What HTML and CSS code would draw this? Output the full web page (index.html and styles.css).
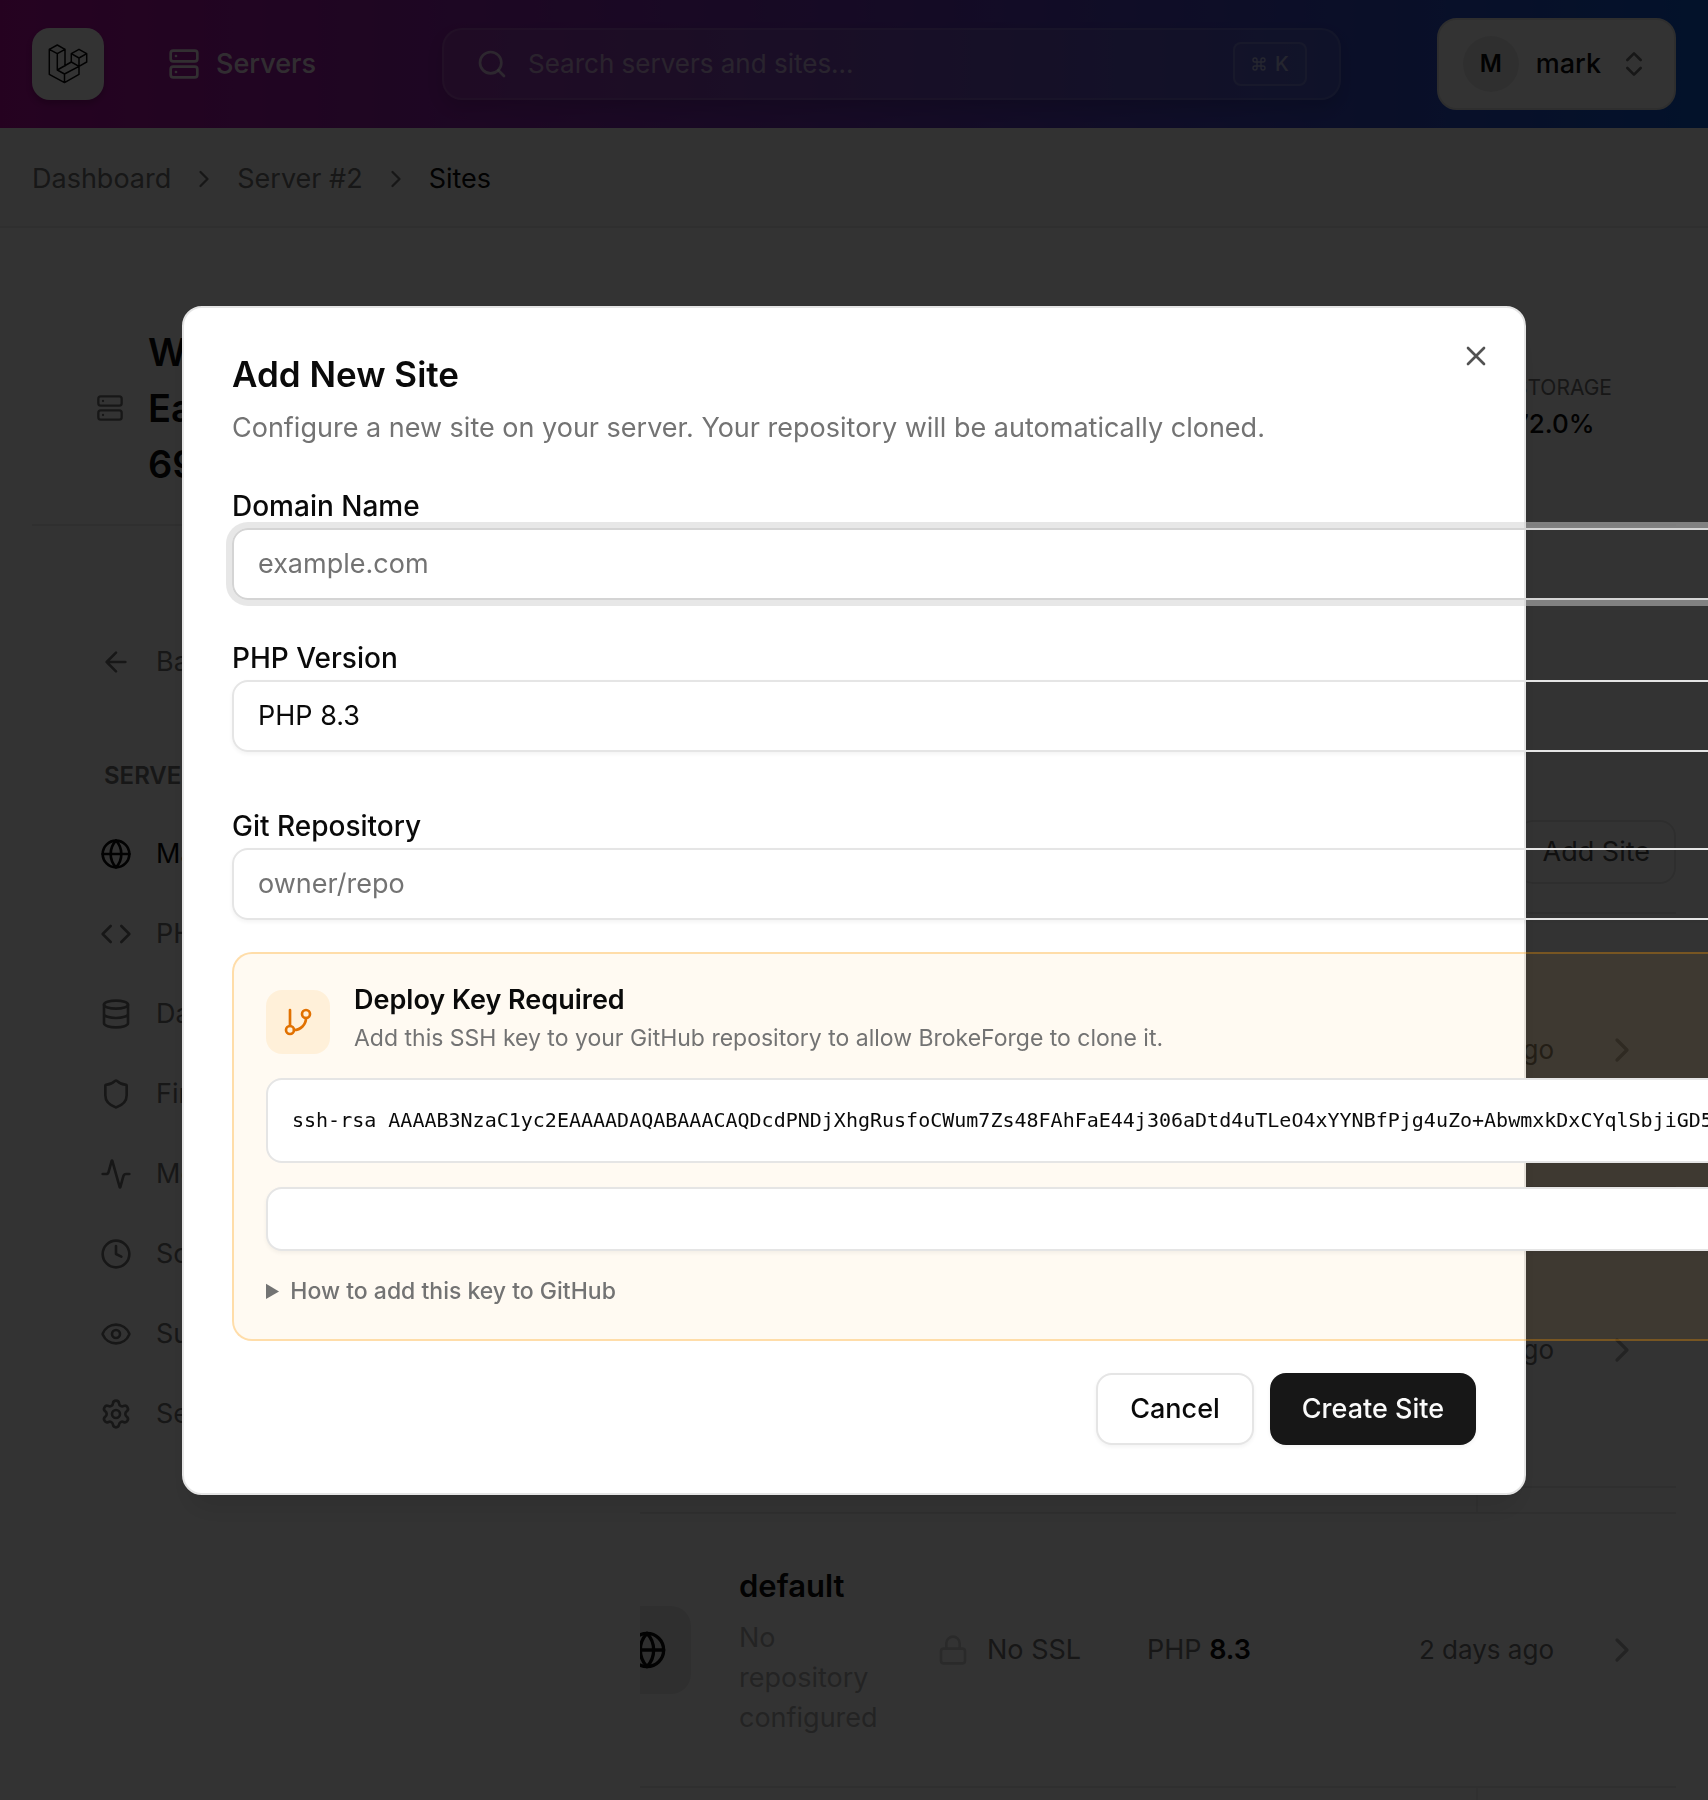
FILE: index.html
```html
<!DOCTYPE html>
<html lang="en">
<head>
<meta charset="utf-8">
<meta name="viewport" content="width=device-width, initial-scale=1">
<title>Sites</title>
<link rel="stylesheet" href="styles.css">
</head>
<body>
<svg class="sprite" aria-hidden="true">
  <symbol id="server" viewBox="0 0 24 24"><rect width="20" height="8" x="2" y="2" rx="2"/><rect width="20" height="8" x="2" y="14" rx="2"/><path d="M6 6h.01M6 18h.01"/></symbol>
  <symbol id="globe" viewBox="0 0 24 24"><circle cx="12" cy="12" r="10"/><path d="M12 2a14.5 14.5 0 0 0 0 20 14.5 14.5 0 0 0 0-20M2 12h20"/></symbol>
  <symbol id="chevron-right" viewBox="0 0 24 24"><path d="m9 18 6-6-6-6"/></symbol>
  <symbol id="lock" viewBox="0 0 24 24"><rect width="18" height="11" x="3" y="11" rx="2"/><path d="M7 11V7a5 5 0 0 1 10 0v4"/></symbol>
</svg>

<header class="topbar">
  <a class="logo" href="#" aria-label="Home">
    <svg viewBox="0 0 40 40" class="logo-mark"><path d="M1.300 5.300 9.300 1 17 5.300 9.300 9.700zM1.300 5.300v25L16.500 38.600 31 30.300v-8L16.500 30v8.600M9.300 9.700V26l7.200 4M17 5.300V22M9.300 26l14-8M23.300 9.700 31 5.300l7.700 4.400L31 14zM23.300 9.700V18l7.700 4.300 7.700-4.300V9.700M31 14v8.300"/></svg>
  </a>
  <a class="nav-link" href="#"><svg class="i32"><use href="#server"/></svg>Servers</a>
  <button class="search" type="button">
    <svg class="i32" viewBox="0 0 24 24"><circle cx="11" cy="11" r="8"/><path d="m21 21-4.300-4.300"/></svg>
    <span class="search-text">Search servers and sites...</span>
    <kbd class="kbd"><svg class="i16" viewBox="0 0 24 24"><path d="M15 6v12a3 3 0 1 0 3-3H6a3 3 0 1 0 3 3V6a3 3 0 1 0-3 3h12a3 3 0 1 0-3-3"/></svg>K</kbd>
  </button>
  <button class="user" type="button">
    <span class="avatar">M</span>
    <span>mark</span>
    <svg class="i32 muted" viewBox="0 0 24 24"><path d="m7 15 5 5 5-5M7 9l5-5 5 5"/></svg>
  </button>
</header>

<nav class="crumbs" aria-label="Breadcrumb">
  <a href="#">Dashboard</a>
  <svg class="i28"><use href="#chevron-right"/></svg>
  <a href="#">Server #2</a>
  <svg class="i28"><use href="#chevron-right"/></svg>
  <span class="crumb-current">Sites</span>
</nav>

<main class="page">
  <section class="server-head">
    <svg class="i28 muted"><use href="#server"/></svg>
    <h1 class="server-name">Web<br>East<br>69</h1>
    <div class="stat"><span class="stat-label">Storage</span><span class="stat-value">72.0%</span></div>
  </section>

  <div class="columns">
    <aside class="sidebar">
      <a class="side-link back" href="#"><svg class="i32" viewBox="0 0 24 24"><path d="m12 19-7-7 7-7M19 12H5"/></svg>Back</a>
      <h2 class="side-title">Server</h2>
      <a class="side-link active" href="#"><svg class="i32"><use href="#globe"/></svg>Main</a>
      <a class="side-link" href="#"><svg class="i32" viewBox="0 0 24 24"><path d="m16 18 6-6-6-6M8 6l-6 6 6 6"/></svg>PHP</a>
      <a class="side-link" href="#"><svg class="i32" viewBox="0 0 24 24"><ellipse cx="12" cy="5" rx="9" ry="3"/><path d="M3 5v14a9 3 0 0 0 18 0V5M3 12a9 3 0 0 0 18 0"/></svg>Data</a>
      <a class="side-link" href="#"><svg class="i32" viewBox="0 0 24 24"><path d="M20 13c0 5-3.500 7.500-7.660 8.950a1 1 0 0 1-.67-.01C7.500 20.500 4 18 4 13V6a1 1 0 0 1 1-1c2 0 4.500-1.200 6.240-2.720a1.170 1.170 0 0 1 1.520 0C14.510 3.810 17 5 19 5a1 1 0 0 1 1 1z"/></svg>Firewall</a>
      <a class="side-link" href="#"><svg class="i32" viewBox="0 0 24 24"><path d="M22 12h-2.480a2 2 0 0 0-1.930 1.460l-2.350 8.360a.25.25 0 0 1-.48 0L9.240 2.180a.25.25 0 0 0-.48 0l-2.350 8.360A2 2 0 0 1 4.490 12H2"/></svg>Monitor</a>
      <a class="side-link" href="#"><svg class="i32" viewBox="0 0 24 24"><circle cx="12" cy="12" r="10"/><path d="M12 6v6l4 2"/></svg>Schedule</a>
      <a class="side-link" href="#"><svg class="i32" viewBox="0 0 24 24"><path d="M2.062 12.348a1 1 0 0 1 0-.696 10.750 10.750 0 0 1 19.876 0 1 1 0 0 1 0 .696 10.750 10.750 0 0 1-19.876 0"/><circle cx="12" cy="12" r="3"/></svg>Supervisor</a>
      <a class="side-link" href="#"><svg class="i32" viewBox="0 0 24 24"><path d="M9.671 4.136a2.340 2.340 0 0 1 4.659 0 2.340 2.340 0 0 0 3.319 1.915 2.340 2.340 0 0 1 2.330 4.033 2.340 2.340 0 0 0 0 3.831 2.340 2.340 0 0 1-2.330 4.033 2.340 2.340 0 0 0-3.319 1.915 2.340 2.340 0 0 1-4.659 0 2.340 2.340 0 0 0-3.320-1.915 2.340 2.340 0 0 1-2.330-4.033 2.340 2.340 0 0 0 0-3.831A2.340 2.340 0 0 1 6.350 6.051a2.340 2.340 0 0 0 3.319-1.915"/><circle cx="12" cy="12" r="3"/></svg>Settings</a>
    </aside>

    <section class="content">
      <div class="content-head"><button class="add-site" type="button">Add Site</button></div>
      <div class="sites">
        <article class="site">
          <span class="tile"><svg class="i40"><use href="#globe"/></svg></span>
          <div class="site-name"><h3>default</h3><p>No repository configured</p></div>
          <span class="ssl"><svg class="i32"><use href="#lock"/></svg>No SSL</span>
          <span class="php">PHP <b>8.3</b></span>
          <span class="age">2 days ago</span>
          <svg class="i40 go"><use href="#chevron-right"/></svg>
        </article>
        <div class="strip"></div>
        <article class="site">
          <span class="tile"><svg class="i40"><use href="#globe"/></svg></span>
          <div class="site-name"><h3>default</h3><p>No repository configured</p></div>
          <span class="ssl"><svg class="i32"><use href="#lock"/></svg>No SSL</span>
          <span class="php">PHP <b>8.3</b></span>
          <span class="age">2 days ago</span>
          <svg class="i40 go"><use href="#chevron-right"/></svg>
        </article>
        <div class="strip"></div>
        <article class="site">
          <span class="tile"><svg class="i40"><use href="#globe"/></svg></span>
          <div class="site-name"><h3>default</h3><p>No repository configured</p></div>
          <span class="ssl"><svg class="i32"><use href="#lock"/></svg>No SSL</span>
          <span class="php">PHP <b>8.3</b></span>
          <span class="age">2 days ago</span>
          <svg class="i40 go"><use href="#chevron-right"/></svg>
        </article>
        <div class="strip"></div>
      </div>
    </section>
  </div>
</main>

<div class="overlay">
  <div class="dialog" role="dialog" aria-modal="true" aria-labelledby="dialog-title">
    <button class="close" type="button" aria-label="Close"><svg class="i32" viewBox="0 0 24 24"><path d="M18 6 6 18M6 6l12 12"/></svg></button>
    <h2 class="dialog-title" id="dialog-title">Add New Site</h2>
    <p class="dialog-text">Configure a new site on your server. Your repository will be automatically cloned.</p>

    <form class="form" id="site-form">
      <div class="field">
        <label for="domain">Domain Name</label>
        <input class="input focused" id="domain" type="text" placeholder="example.com">
      </div>
      <div class="field">
        <label for="php">PHP Version</label>
        <select class="input" id="php"><option>PHP 8.3</option></select>
      </div>
      <div class="field repo">
        <label for="repo">Git Repository</label>
        <input class="input" id="repo" type="text" placeholder="owner/repo">
      </div>
      <div class="deploy">
        <div class="deploy-head">
          <span class="deploy-icon"><svg class="i32" viewBox="0 0 24 24"><path d="M6 3v12"/><circle cx="18" cy="6" r="3"/><circle cx="6" cy="18" r="3"/><path d="M18 9a9 9 0 0 1-9 9"/></svg></span>
          <div>
            <h3 class="deploy-title">Deploy Key Required</h3>
            <p class="deploy-text">Add this SSH key to your GitHub repository to allow BrokeForge to clone it.</p>
          </div>
        </div>
        <code class="key">ssh-rsa AAAAB3NzaC1yc2EAAAADAQABAAACAQDcdPNDjXhgRusfoCWum7Zs48FAhFaE44j306aDtd4uTLeO4xYYNBfPjg4uZo+AbwmxkDxCYqlSbjiGD5</code>
        <button class="copy" type="button" aria-label="Copy key"></button>
        <details class="help"><summary>How to add this key to GitHub</summary></details>
      </div>
    </form>

    <div class="actions">
      <button class="btn" type="button">Cancel</button>
      <button class="btn primary" type="submit" form="site-form">Create Site</button>
    </div>
  </div>
</div>
</body>
</html>
```
FILE: styles.css
```css
*, *::before, *::after { box-sizing: border-box; }
body, h1, h2, h3, p { margin: 0; }
body {
  background: #fff;
  color: #0a0a0a;
  font: 400 27px/40px Inter, "Liberation Sans", sans-serif;
  height: 100vh;
  overflow: hidden;
}
a { color: inherit; text-decoration: none; }
button, input, select { font: inherit; color: inherit; }
svg { fill: none; stroke: currentColor; stroke-width: 2; stroke-linecap: round; stroke-linejoin: round; flex: none; display: block; }
.sprite { position: absolute; width: 0; height: 0; }
.i16 { width: 16px; height: 16px; }
.i28 { width: 28px; height: 28px; }
.i32 { width: 32px; height: 32px; }
.i40 { width: 40px; height: 40px; }
.muted { color: #737373; }

/* Top bar */
.topbar {
  display: flex;
  align-items: center;
  height: 128px;
  padding: 0 32px;
  background: linear-gradient(to right, #ba0ea2, #6e36b8 50%, #0f5ad2);
}
.logo {
  display: grid;
  place-items: center;
  width: 72px;
  height: 72px;
  border-radius: 18px;
  background: #fff;
  box-shadow: 0 4px 6px rgba(0, 0, 0, .2);
}
.logo-mark { width: 40px; height: 40px; stroke-width: 1.5; }
.nav-link {
  display: flex;
  align-items: center;
  gap: 16px;
  margin-left: 64px;
  font-weight: 500;
  color: rgba(255, 255, 255, .9);
}
.search {
  display: flex;
  align-items: center;
  gap: 20px;
  flex: 1;
  height: 72px;
  margin: 0 96px 0 126px;
  padding: 0 32px;
  border: 2px solid rgba(255, 255, 255, .12);
  border-radius: 20px;
  background: rgba(255, 255, 255, .1);
  box-shadow: 0 8px 16px rgba(0, 0, 0, .12);
  color: rgba(255, 255, 255, .7);
  font-size: 26px;
  text-align: left;
}
.search-text { flex: 1; color: rgba(255, 255, 255, .6); }
.kbd {
  display: flex;
  align-items: center;
  gap: 8px;
  height: 44px;
  padding: 0 16px;
  border: 2px solid rgba(255, 255, 255, .18);
  border-radius: 8px;
  background: rgba(255, 255, 255, .05);
  font: 500 20px/24px Inter, sans-serif;
  color: rgba(255, 255, 255, .6);
}
.user {
  display: flex;
  align-items: center;
  gap: 17px;
  height: 92px;
  padding: 0 24px;
  border: 2px solid #e5e5e5;
  border-radius: 20px;
  background: #fff;
  font-weight: 500;
}
.avatar {
  width: 56px;
  height: 56px;
  border-radius: 50%;
  background: #ebebeb;
  font-size: 24px;
  font-weight: 600;
  line-height: 56px;
  text-align: center;
}

/* Breadcrumb */
.crumbs {
  display: flex;
  align-items: center;
  gap: 19px;
  height: 100px;
  padding: 3px 32px 0;
  border-bottom: 2px solid #ebebeb;
  background: #fafafa;
  color: #737373;
}
.crumb-current { color: #0a0a0a; }

/* Server header */
.page { padding: 96px 32px 0; }
.server-head {
  display: flex;
  align-items: center;
  gap: 24px;
  padding: 0 64px 32px;
  border-bottom: 2px solid #ebebeb;
}
.server-name { flex: 1; font-size: 38px; font-weight: 600; line-height: 56px; }
.stat { display: flex; flex-direction: column; }
.stat-label { font-size: 21px; line-height: 32px; text-transform: uppercase; color: #737373; }
.stat-value { font-size: 26px; font-weight: 500; line-height: 40px; }

.columns { display: grid; grid-template-columns: 608px minmax(0, 1fr); }

/* Sidebar */
.sidebar { display: flex; flex-direction: column; padding: 96px 68px 0; }
.side-link { display: flex; align-items: center; gap: 24px; height: 80px; color: #737373; }
.side-link.active { color: #0a0a0a; }
.side-title {
  margin: 54px 4px 18px;
  font-size: 24px;
  font-weight: 600;
  line-height: 40px;
  text-transform: uppercase;
  color: #737373;
}

/* Sites */
.content { overflow: hidden; padding-top: 294px; }
.content-head { display: flex; justify-content: flex-end; padding-bottom: 28px; border-bottom: 2px solid #ebebeb; }
.add-site {
  height: 64px;
  padding: 0 24px;
  border: 2px solid #e5e5e5;
  border-radius: 16px;
  background: #fff;
  color: #525252;
}
.sites { margin-top: -2px; }
.site {
  display: flex;
  align-items: center;
  height: 276px;
  padding: 0 34px 0 0;
  border-top: 2px solid #ebebeb;
  border-bottom: 2px solid #ebebeb;
}
.strip { height: 24px; margin-right: 198px; border-right: 2px solid #f0f0f0; }
.tile {
  display: grid;
  place-items: center;
  flex: none;
  width: 88px;
  height: 88px;
  margin-left: -37px;
  border-radius: 20px;
  background: #ebebeb;
}
.site-name { width: 146px; margin: 0 52px 0 48px; }
.site-name h3 { margin-bottom: 8px; font-size: 31px; font-weight: 600; line-height: 48px; }
.site-name p { width: 140px; color: #b0b0b0; }
.ssl { display: flex; align-items: center; gap: 18px; width: 210px; color: #737373; }
.ssl svg { color: #d0d0d0; }
.php { color: #737373; }
.php b { color: #0a0a0a; font-weight: 600; }
.age { margin-left: auto; font-size: 26px; color: #737373; }
.go { margin-left: 48px; color: #b0b0b0; }

/* Dialog */
.overlay {
  position: fixed;
  inset: 0;
  display: grid;
  place-items: center;
  background: rgba(0, 0, 0, .8);
}
.dialog {
  position: relative;
  width: calc(100% - 64px);
  max-width: 1344px;
  padding: 48px;
  border: 2px solid #e5e5e5;
  border-radius: 20px;
  background: #fff;
  box-shadow: 0 20px 30px -6px rgba(0, 0, 0, .1), 0 8px 12px -8px rgba(0, 0, 0, .1);
}
.close {
  position: absolute;
  top: 32px;
  right: 32px;
  padding: 0;
  border: 0;
  background: none;
  color: #525252;
}
.dialog-title { font-size: 35px; font-weight: 600; line-height: 36px; }
.dialog-text { margin-top: 16px; color: #737373; }
.form { width: max-content; min-width: 100%; }
.field { display: flex; flex-direction: column; gap: 8px; margin-top: 44px; }
.field.repo { margin-top: 60px; }
.field label { font-size: 28px; font-weight: 500; line-height: 28px; }
.input {
  width: 100%;
  height: 72px;
  padding: 0 24px;
  border: 2px solid #e5e5e5;
  border-radius: 16px;
  outline: 0;
  background: transparent;
  box-shadow: 0 2px 4px rgba(0, 0, 0, .05);
  appearance: none;
}
.input::placeholder { color: #737373; opacity: 1; }
.input.focused { border-color: #d4d4d4; box-shadow: 0 0 0 6px rgba(207, 207, 207, .5); }

.deploy {
  margin-top: 32px;
  padding: 32px;
  border: 2px solid rgba(254, 154, 0, .3);
  border-radius: 20px;
  background: rgba(254, 154, 0, .05);
}
.deploy-head { display: flex; gap: 24px; }
.deploy-icon {
  display: grid;
  place-items: center;
  width: 64px;
  height: 64px;
  margin-top: 4px;
  border-radius: 16px;
  background: rgba(254, 154, 0, .1);
  color: #e17100;
}
.deploy-title { font-size: 27px; font-weight: 600; line-height: 28px; }
.deploy-text { margin-top: 4px; font-size: 23px; line-height: 40px; color: #737373; }
.key {
  display: block;
  margin-top: 20px;
  padding: 24px;
  border: 2px solid #e5e5e5;
  border-radius: 16px;
  background: #fff;
  font: 20px/33px "DejaVu Sans Mono", monospace;
  white-space: nowrap;
}
.copy {
  display: block;
  width: 100%;
  height: 64px;
  margin-top: 24px;
  border: 2px solid #e5e5e5;
  border-radius: 16px;
  background: #fff;
  box-shadow: 0 2px 4px rgba(0, 0, 0, .05);
}
.help { margin-top: 24px; font-size: 23px; font-weight: 500; line-height: 32px; color: #737373; }

.actions { display: flex; justify-content: flex-end; gap: 16px; margin-top: 32px; }
.btn {
  height: 72px;
  padding: 0 32px;
  border: 2px solid #e5e5e5;
  border-radius: 16px;
  background: #fff;
  box-shadow: 0 2px 4px rgba(0, 0, 0, .05);
  font-weight: 500;
}
.btn.primary { border: 0; background: #171717; color: #fafafa; }
```
